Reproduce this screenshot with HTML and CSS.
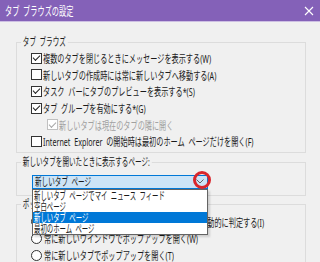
FILE: index.html
```html
<!DOCTYPE html>
<html lang="ja">
<head>
    <meta charset="UTF-8">
    <title>タブ ブラウズの設定</title>
    <link rel="stylesheet" href="styles.css">
</head>
<body>
    <div class="window">
        <div class="titlebar">
            <span class="title text">タブ ブラウズの設定</span>
            <svg class="close" width="10" height="10" viewBox="0 0 10 10">
                <path d="M1 1 L9 9 M9 1 L1 9" stroke="#fff" stroke-width="1.1" fill="none"/>
            </svg>
        </div>

        <div class="content">
            <section class="group group-tabs">
                <h2 class="group-title"><span class="text">タブ ブラウズ</span></h2>
                <div class="group-body">
                    <div class="option"><span class="check checked"></span><span class="text">複数のタブを閉じるときにメッセージを表示する(W)</span></div>
                    <div class="option"><span class="check"></span><span class="text">新しいタブの作成時には常に新しいタブへ移動する(A)</span></div>
                    <div class="option"><span class="check checked"></span><span class="text">タスク バーにタブのプレビューを表示する*(S)</span></div>
                    <div class="option"><span class="check checked"></span><span class="text">タブ グループを有効にする*(G)</span></div>
                    <div class="option sub disabled"><span class="check checked"></span><span class="text">新しいタブは現在のタブの隣に開く</span></div>
                    <div class="option"><span class="check"></span><span class="text">Internet Explorer の開始時は最初のホーム ページだけを開く(F)</span></div>
                </div>
            </section>

            <section class="group group-newtab">
                <h2 class="group-title"><span class="text">新しいタブを開いたときに表示するページ:</span></h2>
                <div class="group-body">
                    <div class="combo">
                        <div class="combo-field">
                            <span class="text">新しいタブ ページ</span>
                            <svg class="chevron" width="8" height="5" viewBox="0 0 8 5">
                                <path d="M0.5 0.5 L4 4 L7.5 0.5" stroke="#606060" stroke-width="1" fill="none"/>
                            </svg>
                        </div>
                        <ul class="combo-list">
                            <li><span class="text">新しいタブ ページでマイ ニュース フィード</span></li>
                            <li><span class="text">空白ページ</span></li>
                            <li class="selected"><span class="text">新しいタブ ページ</span></li>
                            <li><span class="text">最初のホーム ページ</span></li>
                        </ul>
                        <span class="mark"></span>
                    </div>
                </div>
            </section>

            <section class="group group-popup">
                <h2 class="group-title"><span class="text">ポップアップの発生時:</span></h2>
                <div class="group-body">
                    <div class="option"><span class="radio"></span><span class="text">Internet Explorer でポップアップを開く方法を自動的に判定する(I)</span></div>
                    <div class="option"><span class="radio"></span><span class="text">常に新しいウインドウでポップアップを開く(W)</span></div>
                    <div class="option"><span class="radio"></span><span class="text">常に新しいタブでポップアップを開く(T)</span></div>
                </div>
            </section>
        </div>
    </div>
</body>
</html>
```

FILE: styles.css
```css
body {
    margin: 0;
    background: #f0f0f0;
    font-family: "Noto Sans", "Noto Sans CJK JP", sans-serif;
    font-size: 11px;
    color: #1a1a1a;
}
.window {
    width: 320px;
    height: 262px;
    overflow: hidden;
}

.text {
    display: inline-block;
    white-space: nowrap;
    word-spacing: 3px;
    transform: scaleX(0.65);
    transform-origin: left center;
}

.titlebar {
    height: 21px;
    background: #8461b8;
    border-bottom: 1px solid #cdbfe3;
    display: flex;
    align-items: center;
    justify-content: space-between;
    padding: 0 6px 0 5px;
    color: #fff;
}
.title {
    font-size: 12px;
    transform: scaleX(0.6);
}
.content {
    padding: 20px 14px 0 16px;
}
.group {
    border: 1px solid #dcdcdc;
}
.group-title {
    margin: -8px 0 0 4px;
    height: 14px;
    line-height: 14px;
    font-size: 11px;
    font-weight: normal;
}
.group-title .text {
    background: #f0f0f0;
    padding: 0 3px;
    transform: scaleX(0.6);
}
.group-tabs .group-body {
    padding: 1px 0 2px 14px;
}
.group-newtab {
    margin-top: 9px;
}
.group-newtab .group-body {
    padding: 6px 0 6px 15px;
}
.group-popup {
    margin-top: 8px;
}
.group-popup .group-body {
    padding: 3px 0 4px 14px;
}
.option {
    display: flex;
    align-items: center;
    gap: 1px;
    height: 16.6px;
}
.option.sub {
    padding-left: 16px;
}
.option.disabled {
    color: #a0a0a0;
}
.check {
    width: 11px;
    height: 11px;
    box-sizing: border-box;
    border: 1px solid #333;
    background: #fff;
    flex: none;
    display: flex;
    align-items: center;
    justify-content: center;
}
.check.checked::after {
    content: "";
    width: 6px;
    height: 3px;
    border-left: 1.2px solid #222;
    border-bottom: 1.2px solid #222;
    transform: translateY(-1px) rotate(-45deg);
}
.disabled .check {
    border-color: #c0c0c0;
}
.disabled .check.checked::after {
    border-color: #a8a8a8;
}
.radio {
    width: 11px;
    height: 11px;
    box-sizing: border-box;
    border: 1px solid #333;
    border-radius: 50%;
    background: #fff;
    flex: none;
    margin-right: 1px;
}
.combo {
    position: relative;
    width: 176px;
}
.combo-field {
    height: 14px;
    box-sizing: border-box;
    border: 1px solid #0078d7;
    background: #cce4f7;
    display: flex;
    align-items: center;
    justify-content: space-between;
    padding: 0 3px 0 2px;
    line-height: 12px;
}
.combo-field .text {
    transform: scaleX(0.6);
}
.combo-list {
    position: absolute;
    top: 100%;
    left: 0;
    width: 176px;
    box-sizing: border-box;
    margin: 0;
    padding: 0;
    list-style: none;
    background: #fff;
    border: 1px solid #646464;
    box-shadow: 2px 2px 2px rgba(0, 0, 0, 0.15);
    z-index: 2;
}
.combo-list li {
    height: 11px;
    line-height: 11px;
    padding-left: 1px;
}
.combo-list .text {
    transform: scaleX(0.58);
}
.combo-list li.selected {
    background: #0078d7;
    color: #fff;
}
.mark {
    position: absolute;
    left: 161px;
    top: -4px;
    width: 18px;
    height: 18px;
    box-sizing: border-box;
    border: 3px solid #d9262c;
    border-radius: 50%;
    z-index: 3;
}
```
